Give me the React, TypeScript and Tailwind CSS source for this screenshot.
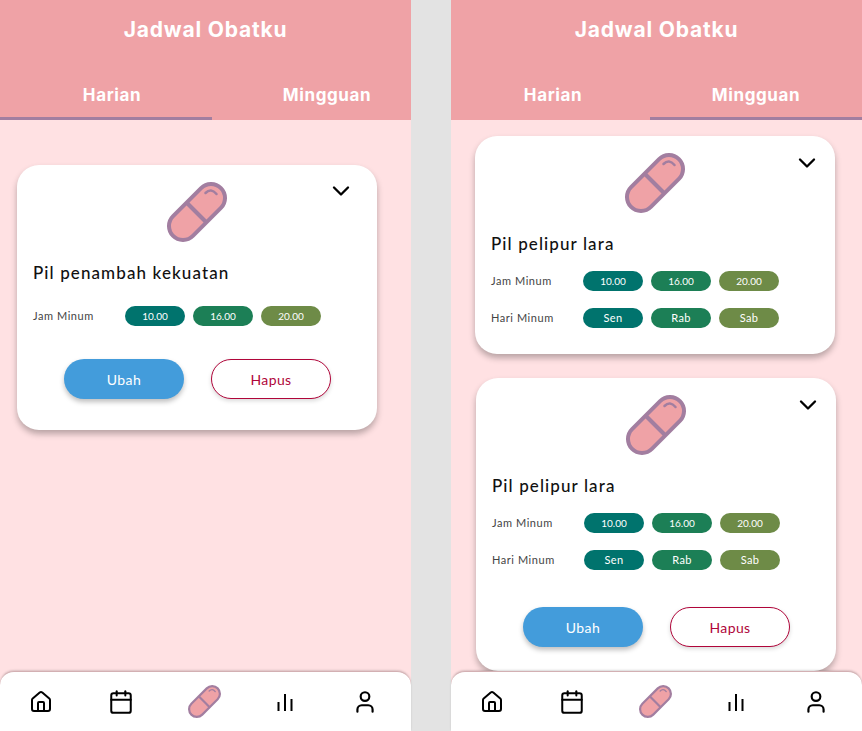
import { Calendar, ChevronDown, House, User } from "lucide-react";

const hours = ["10.00", "16.00", "20.00"];
const days = ["Sen", "Rab", "Sab"];
const chipColors = ["bg-[#00736d]", "bg-[#1c7f56]", "bg-[#6e8b47]"];

function PillIcon({ className }: { className: string }) {
  return (
    <svg viewBox="0 0 60 60" className={className} fill="none">
      <rect
        x="-3.8"
        y="16"
        width="67.6"
        height="28"
        rx="14"
        transform="rotate(-45 30 30)"
        fill="#efa2a6"
        stroke="#a27ea0"
        strokeWidth="4"
      />
      <path d="M20 21L38.5 39.5" stroke="#a27ea0" strokeWidth="4" />
      <path d="M38.5 11Q44 5.5 49.5 12" stroke="#a27ea0" strokeWidth="2.5" strokeLinecap="round" />
    </svg>
  );
}

function ChipRow({ label, items, small }: { label: string; items: string[]; small?: boolean }) {
  return (
    <div className="flex items-center h-5">
      <span className="w-[92px] text-[11px] tracking-[0.55px] text-[#444] font-['Lato',sans-serif]">{label}</span>
      <div className="flex gap-2">
        {items.map((item, i) => (
          <span
            key={item}
            className={`w-[60px] h-5 rounded-full flex items-center justify-center text-white font-['Lato',sans-serif] ${small ? "text-[10px]" : "text-[11px] tracking-[0.3px]"} ${chipColors[i]}`}
          >
            {item}
          </span>
        ))}
      </div>
    </div>
  );
}

function Actions({ className }: { className: string }) {
  return (
    <div className={`flex gap-[27px] ${className}`}>
      <button className="w-[120px] h-10 rounded-full bg-[#439cdb] text-white text-[14px] tracking-[0.4px] shadow-[0_3px_5px_rgba(0,0,0,0.25)]">
        Ubah
      </button>
      <button className="w-[120px] h-10 rounded-full bg-white border border-[#b0053a] text-[#b0053a] text-[14px] tracking-[0.4px] shadow-[0_2px_4px_rgba(0,0,0,0.15)]">
        Hapus
      </button>
    </div>
  );
}

function Header({ active }: { active: "harian" | "mingguan" }) {
  const daily = active === "harian";
  return (
    <header className="h-[120px] shrink-0 bg-[#efa2a6] flex flex-col text-white font-['Inter',sans-serif] font-bold">
      <h1 className="h-[60px] flex items-center justify-center text-[21px] tracking-[0.8px]">Jadwal Obatku</h1>
      <div className="flex-1 flex text-[17px] tracking-[0.6px]">
        <div className={`flex justify-center pt-[23px] ${daily ? "w-[212px] pl-3 border-b-[3px] border-[#a27ea0]" : "w-[199px] pl-[5px]"}`}>
          Harian
        </div>
        <div className={`flex justify-center pt-[23px] ${daily ? "w-[199px] pl-[31px]" : "w-[212px] border-b-[3px] border-[#a27ea0]"}`}>
          Mingguan
        </div>
      </div>
    </header>
  );
}

function BottomNav() {
  return (
    <nav className="relative h-[60px] shrink-0 bg-white rounded-t-[14px] border-t border-[#d3b0b3] shadow-[0_-1px_2px_rgba(0,0,0,0.15)] flex items-center pl-[29px] text-black">
      <House size={24} strokeWidth={2} />
      <Calendar size={26} strokeWidth={1.85} className="ml-[55px]" />
      <PillIcon className="w-[33px] h-[33px] ml-[54px]" />
      <svg viewBox="0 0 24 24" className="w-6 h-6 ml-[52px]" fill="none" stroke="currentColor" strokeWidth="2">
        <path d="M5.5 12V21M12 4V21M18.5 9V21" />
      </svg>
      <User size={26} strokeWidth={2} className="ml-[55px]" />
    </nav>
  );
}

function Card({ title, className, chevronClass, rowsClass, children }: { title: string; className: string; chevronClass: string; rowsClass: string; children?: React.ReactNode }) {
  return (
    <section className={`relative w-[360px] bg-white rounded-[22px] shadow-[0_4px_6px_rgba(0,0,0,0.28)] px-4 pt-[17px] ${className}`}>
      <ChevronDown size={28} strokeWidth={2} className={`absolute text-black ${chevronClass}`} />
      <PillIcon className="w-[60px] h-[60px] mx-auto" />
      <h2 className="mt-[20px] h-[22px] leading-[22px] text-[17px] font-medium tracking-[1.1px] text-[#111]">{title}</h2>
      <div className={`flex flex-col gap-[17px] ${rowsClass}`}>{children}</div>
    </section>
  );
}

export default function App() {
  return (
    <div className="w-[862px] h-[731px] flex justify-between bg-[#e3e3e3] font-['Lato',sans-serif] overflow-hidden">
      <div className="w-[411px] h-full flex flex-col bg-[#ffe1e3]">
        <Header active="harian" />
        <main className="flex-1 pt-[45px] pl-[17px]">
          <Card title="Pil penambah kekuatan" className="h-[265px]" chevronClass="top-[12px] right-[22px]" rowsClass="mt-[22px]">
            <ChipRow label="Jam Minum" items={hours} small />
            <Actions className="mt-[16px] ml-[31px]" />
          </Card>
        </main>
        <BottomNav />
      </div>

      <div className="w-[411px] h-full flex flex-col bg-[#ffe1e3]">
        <Header active="mingguan" />
        <main className="flex-1 min-h-0 pt-4 pl-6 flex flex-col gap-6">
          <Card title="Pil pelipur lara" className="h-[218px] shrink-0" chevronClass="top-[13px] right-[14px]" rowsClass="mt-[16px]">
            <ChipRow label="Jam Minum" items={hours} small />
            <ChipRow label="Hari Minum" items={days} />
          </Card>
          <Card title="Pil pelipur lara" className="h-[293px] shrink-0 ml-px" chevronClass="top-[13px] right-[14px]" rowsClass="mt-[16px]">
            <ChipRow label="Jam Minum" items={hours} small />
            <ChipRow label="Hari Minum" items={days} />
            <Actions className="mt-[20px] ml-[31px]" />
          </Card>
        </main>
        <BottomNav />
      </div>
    </div>
  );
}
